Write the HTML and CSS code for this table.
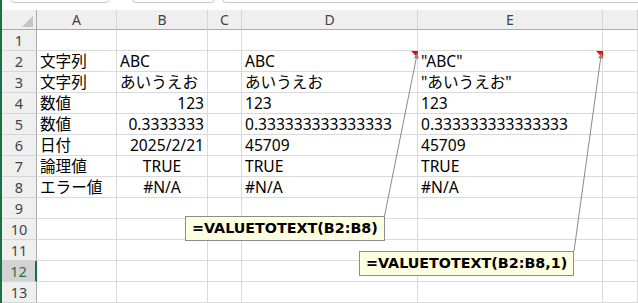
FILE: index.html
```html
<!DOCTYPE html>
<html lang="ja">
<head>
<meta charset="utf-8">
<title>VALUETOTEXT</title>
<link rel="stylesheet" href="styles.css">
</head>
<body>
<div class="app">
  <div class="topbar">
    <div class="box namebox"></div>
    <div class="box fxbox"></div>
    <div class="box formula"></div>
  </div>
  <div class="sheet">
    <div class="corner"><span class="tri"></span></div>
    <div class="ch">A</div><div class="ch">B</div><div class="ch">C</div><div class="ch">D</div><div class="ch">E</div><div class="ch"></div>

    <div class="rh">1</div><div class="cell"></div><div class="cell"></div><div class="cell"></div><div class="cell"></div><div class="cell"></div><div class="cell"></div>

    <div class="rh">2</div><div class="cell">文字列</div><div class="cell">ABC</div><div class="cell"></div><div class="cell cm">ABC</div><div class="cell cm">"ABC"</div><div class="cell"></div>

    <div class="rh">3</div><div class="cell">文字列</div><div class="cell">あいうえお</div><div class="cell"></div><div class="cell">あいうえお</div><div class="cell">"あいうえお"</div><div class="cell"></div>

    <div class="rh">4</div><div class="cell">数値</div><div class="cell r">123</div><div class="cell"></div><div class="cell">123</div><div class="cell">123</div><div class="cell"></div>

    <div class="rh">5</div><div class="cell">数値</div><div class="cell r">0.3333333</div><div class="cell"></div><div class="cell">0.333333333333333</div><div class="cell">0.333333333333333</div><div class="cell"></div>

    <div class="rh">6</div><div class="cell">日付</div><div class="cell r">2025/2/21</div><div class="cell"></div><div class="cell">45709</div><div class="cell">45709</div><div class="cell"></div>

    <div class="rh">7</div><div class="cell">論理値</div><div class="cell c">TRUE</div><div class="cell"></div><div class="cell">TRUE</div><div class="cell">TRUE</div><div class="cell"></div>

    <div class="rh">8</div><div class="cell">エラー値</div><div class="cell c">#N/A</div><div class="cell"></div><div class="cell">#N/A</div><div class="cell">#N/A</div><div class="cell"></div>

    <div class="rh">9</div><div class="cell"></div><div class="cell"></div><div class="cell"></div><div class="cell"></div><div class="cell"></div><div class="cell"></div>

    <div class="rh">10</div><div class="cell"></div><div class="cell"></div><div class="cell"></div><div class="cell"></div><div class="cell"></div><div class="cell"></div>

    <div class="rh">11</div><div class="cell"></div><div class="cell"></div><div class="cell"></div><div class="cell"></div><div class="cell"></div><div class="cell"></div>

    <div class="rh sel">12</div><div class="cell"></div><div class="cell"></div><div class="cell"></div><div class="cell"></div><div class="cell"></div><div class="cell"></div>

    <div class="rh">13</div><div class="cell"></div><div class="cell"></div><div class="cell"></div><div class="cell"></div><div class="cell"></div><div class="cell"></div>
  </div>

  <svg class="overlay" width="638" height="303" viewBox="0 0 638 303">
    <line x1="384.5" y1="216" x2="416.5" y2="57" stroke="#8a8a8a" stroke-width="1"/>
    <polygon points="417.5,52.5 418.8,58.9 413.9,57.9" fill="#8a8a8a"/>
    <line x1="574" y1="251" x2="600.8" y2="57" stroke="#8a8a8a" stroke-width="1"/>
    <polygon points="601.5,52.5 603.2,58.7 598.2,58.1" fill="#8a8a8a"/>
  </svg>

  <div class="callout c1">=VALUETOTEXT(B2:B8)</div>
  <div class="callout c2">=VALUETOTEXT(B2:B8,1)</div>
</div>
</body>
</html>
```

FILE: styles.css
```css
html, body {
  margin: 0;
  padding: 0;
  background: #ffffff;
}

body {
  width: 638px;
  height: 303px;
  overflow: hidden;
}

.app {
  position: relative;
  width: 638px;
  height: 303px;
  box-sizing: border-box;
  border-left: 2px solid #1d7044;
  overflow: hidden;
  font-family: "Noto Sans", "Noto Sans CJK JP", sans-serif;
}

.topbar {
  height: 10px;
  display: flex;
  padding-left: 8px;
  background: #ffffff;
}

.box {
  height: 11px;
  margin-top: -8px;
  box-sizing: border-box;
  border: 1px solid #c9c9c9;
  border-radius: 4px;
  background: #ffffff;
}

.namebox { width: 100px; }
.fxbox { width: 83px; margin-left: 22px; }
.formula { flex: 1; margin-left: 7px; margin-right: -10px; }

.sheet {
  display: grid;
  grid-template-columns: 35px 80px 91px 34px 176px 185px 1fr;
  grid-template-rows: 20px repeat(13, 21px);
}

.sheet > div {
  box-sizing: border-box;
  white-space: nowrap;
}

.corner {
  background: #efefef;
  border-right: 1px solid #ababab;
  border-bottom: 1px solid #ababab;
  display: flex;
  justify-content: flex-end;
  align-items: flex-end;
}

.tri {
  width: 11px;
  height: 11px;
  margin: 0 3px 2px 0;
  background: #c4c4c4;
  clip-path: polygon(100% 0, 100% 100%, 0 100%);
}

.ch {
  background: #efefef;
  border-right: 1px solid #d6d6d6;
  border-bottom: 1px solid #ababab;
  text-align: center;
  font-size: 14px;
  line-height: 19px;
  color: #444444;
}

.rh {
  background: #efefef;
  border-right: 1px solid #ababab;
  border-bottom: 1px solid #d6d6d6;
  text-align: center;
  font-size: 14.5px;
  line-height: 20px;
  color: #444444;
}

.rh.sel {
  background: #d3d3d3;
  color: #1d7044;
  border-right: 2px solid #1d7044;
}

.cell {
  position: relative;
  border-right: 1px solid #dadada;
  border-bottom: 1px solid #dadada;
  padding: 0 3px;
  font-size: 15.6px;
  line-height: 21px;
  color: #000000;
}

.cell.r { text-align: right; }
.cell.c { text-align: center; }

.cell.cm::after {
  content: "";
  position: absolute;
  top: 0;
  right: -1px;
  width: 0;
  height: 0;
  border-top: 7px solid #ff0000;
  border-left: 7px solid transparent;
}

.overlay {
  position: absolute;
  left: -2px;
  top: 0;
  pointer-events: none;
}

.callout {
  position: absolute;
  box-sizing: border-box;
  height: 25px;
  padding-left: 6px;
  border: 1px solid #8c8c8c;
  background: #ffffe1;
  font-family: "DejaVu Sans", sans-serif;
  font-weight: bold;
  font-size: 14.3px;
  line-height: 23px;
  color: #000000;
  white-space: nowrap;
}

.c1 { left: 183px; top: 216px; width: 200px; }
.c2 { left: 357px; top: 251px; width: 215px; }
```
